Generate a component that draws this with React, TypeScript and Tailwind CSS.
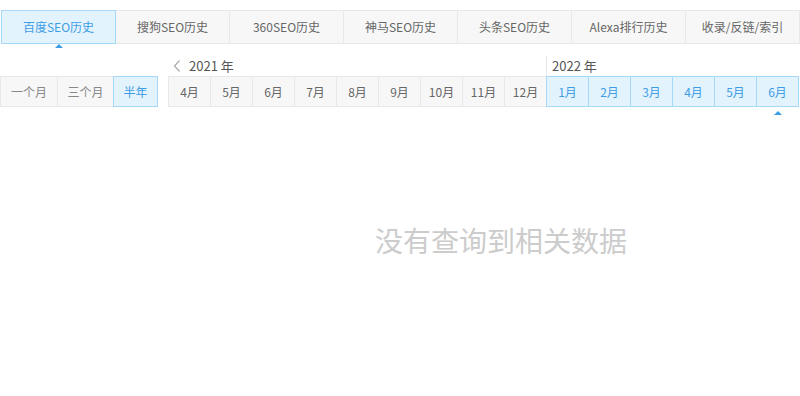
import React from "react";

const tabs = ["百度SEO历史", "搜狗SEO历史", "360SEO历史", "神马SEO历史", "头条SEO历史", "Alexa排行历史", "收录/反链/索引"];
const m2021 = ["4月", "5月", "6月", "7月", "8月", "9月", "10月", "11月", "12月"];
const m2022 = ["1月", "2月", "3月", "4月", "5月", "6月"];

const font = { fontFamily: '"Noto Sans CJK SC", "Noto Sans", sans-serif' };

function Caret() {
  return (
    <div className="w-0 h-0 border-l-[4px] border-r-[4px] border-b-[4px] border-l-transparent border-r-transparent border-b-[#3b9de4]" />
  );
}

export default function App() {
  return (
    <div className="w-[800px] h-[396px] bg-white overflow-hidden text-[12px]" style={font}>
      <div className="flex pl-px pt-[10px]">
        {tabs.map((t, i) => (
          <div
            key={t}
            className={
              "relative w-[115px] h-[34px] flex items-center justify-center border " +
              (i === 0
                ? "z-10 bg-[#e3f3fe] border-[#a8d8f8] text-[#3e9de3]"
                : "-ml-px bg-[#f7f7f7] border-[#e8e8e8] text-[#666666]")
            }
          >
            {t}
            {i === 0 && (
              <div className="absolute left-1/2 -translate-x-1/2 -bottom-[5px]">
                <Caret />
              </div>
            )}
          </div>
        ))}
      </div>

      <div className="flex items-end mt-[12px]">
        <div className="flex h-[31px]">
          {["一个月", "三个月", "半年"].map((t, i) => (
            <div
              key={t}
              className={
                "h-full flex items-center justify-center border " +
                (i === 0
                  ? "w-[58px] bg-[#f7f7f7] border-[#e8e8e8] text-[#888888]"
                  : i === 1
                  ? "w-[57px] -ml-px bg-[#f7f7f7] border-[#e8e8e8] text-[#888888]"
                  : "w-[45px] -ml-px bg-[#e3f3fe] border-[#a8d8f8] text-[#3e9de3] relative z-10")
              }
            >
              {t}
            </div>
          ))}
        </div>

        <div className="ml-[10px] flex flex-col">
          <div className="h-[20px] flex items-center pl-[4px] text-[#555555] text-[13px]">
            <svg width="10" height="14" viewBox="0 0 10 14" className="mr-[7px]">
              <path d="M7.5 1.5 L2.5 7 L7.5 12.5" fill="none" stroke="#aaaaaa" strokeWidth="1.2" />
            </svg>
            2021 年
          </div>
          <div className="flex h-[31px]">
            {m2021.map((m, i) => (
              <div
                key={m}
                className={
                  "w-[43px] h-full flex items-center justify-center border bg-[#f7f7f7] border-[#e8e8e8] text-[#666666] " +
                  (i === 0 ? "" : "-ml-px")
                }
              >
                {m}
              </div>
            ))}
          </div>
        </div>

        <div className="flex flex-col -ml-px relative z-10">
          <div className="h-[20px] flex items-center pl-[5px] border-l border-[#e8e8e8] text-[#555555] text-[13px]">
            2022 年
          </div>
          <div className="flex h-[31px]">
            {m2022.map((m, i) => (
              <div
                key={m}
                className={
                  "relative w-[43px] h-full flex items-center justify-center border bg-[#e3f3fe] border-[#a8d8f8] text-[#3e9de3] " +
                  (i === 0 ? "" : "-ml-px")
                }
              >
                {m}
                {i === 5 && (
                  <div className="absolute left-1/2 -translate-x-1/2 -bottom-[9px]">
                    <Caret />
                  </div>
                )}
              </div>
            ))}
          </div>
        </div>
      </div>

      <div className="pl-[375px] mt-[119px] text-[28px] leading-[28px] text-[#cccccc]">没有查询到相关数据</div>
    </div>
  );
}
